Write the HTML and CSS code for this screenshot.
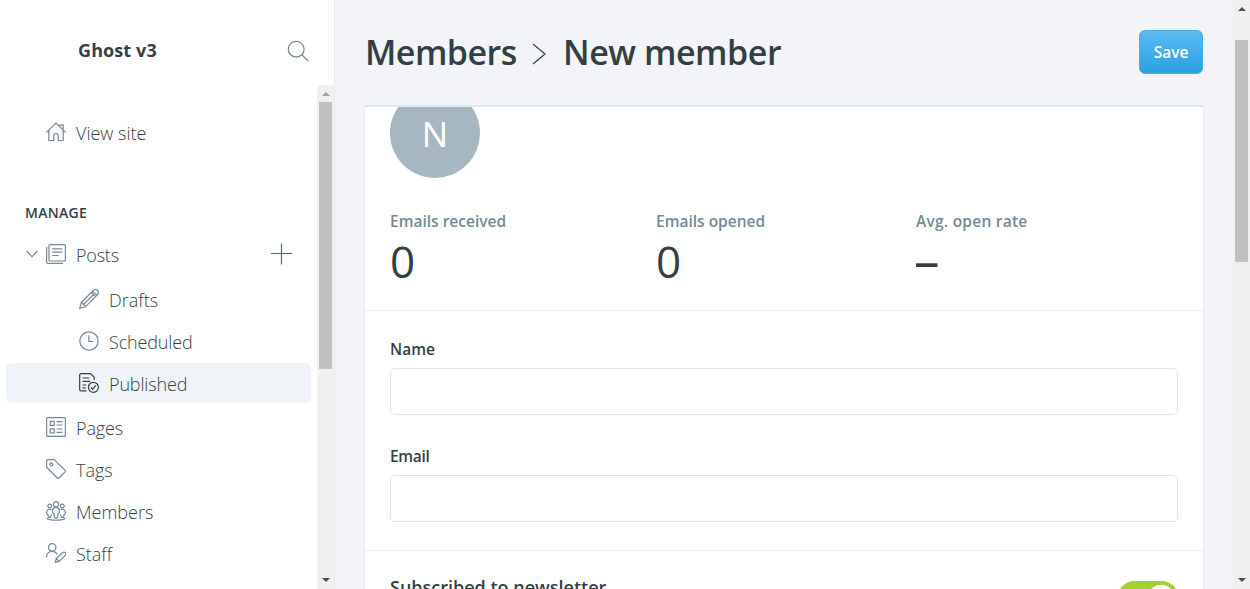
FILE: index.html
```html
<!DOCTYPE html>
<html lang="en">
<head>
<meta charset="utf-8">
<title>New member - Ghost v3</title>
<link rel="stylesheet" href="styles.css">
</head>
<body>
<div class="app">
  <nav class="sidebar">
    <header class="side-head">
      <span class="site-name">Ghost v3</span>
      <svg class="search" viewBox="0 0 22 22"><circle cx="9.2" cy="9.2" r="7.9"/><path d="M14.8 14.8l6.400 6.200"/></svg>
    </header>
    <div class="side-body">
      <div class="menu">
        <a class="item view-site">
          <svg class="icon" viewBox="0 0 20 20"><path d="M.5 10.400L10 1l9.500 9.400M2.800 8.600v9.900h5v-4.800a2.200 2.200 0 0 1 4.400 0v4.800h5V8.600M13 3.200h4.200v4.200"/></svg>
          <span>View site</span>
        </a>
        <h2 class="section"><span>MANAGE</span></h2>
        <a class="item posts">
          <svg class="chev" viewBox="0 0 12 8"><path d="M.5 1l5.500 5.700L11.500 1"/></svg>
          <svg class="icon" viewBox="0 0 20 20"><rect x="3" y=".6" width="16.400" height="16.400" rx="1"/><path d="M.6 3v15a1.400 1.400 0 0 0 1.400 1.400h15M6.200 4.800h10M6.200 8.200h10M6.200 11.500h6.500"/></svg>
          <span class="t-posts">Posts</span>
          <svg class="plus" viewBox="0 0 22 22"><path d="M10.500 .5v21M0 10.500h21"/></svg>
        </a>
        <a class="item sub">
          <svg class="icon" viewBox="0 0 20 20"><path d="M.7 19.300l1.500-5.700L14.300 1.500a2.900 2.900 0 0 1 4.200 4.200L6.400 17.800zM2.200 13.600l1.600.7.500 1.500 1.600.5.500 1.500M12.300 3.500l4.200 4.200M13.600 2.200l4.200 4.200M4.900 15.200L14.600 5.500"/></svg>
          <span>Drafts</span>
        </a>
        <a class="item sub">
          <svg class="icon" viewBox="0 0 20 20"><circle cx="10" cy="10" r="9.200"/><path d="M9.800 4.200v6.300h4.400"/></svg>
          <span class="t-sched">Scheduled</span>
        </a>
        <a class="item sub active">
          <svg class="icon" viewBox="0 0 20 20"><path d="M7.500 17.800H2A1.300 1.300 0 0 1 .7 16.500V2A1.300 1.300 0 0 1 2 .7h9.600l3.600 3.600V7M3.500 5h7M3.500 8.400h7.800M3.500 12h4M3.500 14.800h3.200"/><circle cx="14.400" cy="14.300" r="5"/><path d="M11.900 14.500l1.800 1.800 3-3.900"/></svg>
          <span class="t-pub">Published</span>
        </a>
        <a class="item pages">
          <svg class="icon" viewBox="0 0 20 20"><rect x=".6" y=".6" width="18.800" height="18.800" rx="1"/><path d="M4.200 4.400h4v4h-4zM4.200 11.800h4v4h-4zM10.500 4.600h6M10.500 8h6M10.500 12h6M10.500 15.300h6"/></svg>
          <span class="t-pages">Pages</span>
        </a>
        <a class="item">
          <svg class="icon" viewBox="0 0 20 20"><path d="M.6 2A1.400 1.400 0 0 1 2 .6h6l11.100 10.700a1.200 1.200 0 0 1 0 1.600L13 19a1.200 1.200 0 0 1-1.700 0L.6 8.200z"/><circle cx="5.300" cy="5.400" r="1.500"/></svg>
          <span>Tags</span>
        </a>
        <a class="item">
          <svg class="icon" viewBox="0 0 20 20"><circle cx="10" cy="3.200" r="2.600"/><circle cx="3.700" cy="5" r="1.900"/><circle cx="16.300" cy="5" r="1.900"/><path d="M8.600 16.800L8 12.500l-1.400-.8V9.800a3.400 3.400 0 0 1 6.800 0v1.900l-1.400.8-.6 4.300zM5.500 8.800A3 3 0 0 0 .7 11v1.700l1.200.9.500 2.700h2.200l.9-3M14.500 8.800a3 3 0 0 1 4.800 2.200v1.700l-1.200.9-.5 2.700h-2.200l-.9-3M.5 17.200c3.500 2.600 15.500 2.600 19 0"/></svg>
          <span>Members</span>
        </a>
        <a class="item">
          <svg class="icon" viewBox="0 0 20 20"><circle cx="6.200" cy="4.400" r="3.700"/><path d="M.6 14.500c0-7 7.500-8 11-3.200M9.400 19.200l.9-3.800 6.200-5.700a1.900 1.900 0 0 1 2.700 2.700l-6 6zM10.300 15.400l2.900 3"/></svg>
          <span>Staff</span>
        </a>
      </div>
      <div class="bar side-bar"><i class="up muted"></i><i class="thumb"></i><i class="down"></i></div>
    </div>
  </nav>
  <main class="main">
    <header class="top">
      <h1 class="crumbs"><span class="crumb">Members</span><svg class="sep" viewBox="0 0 14 22"><path d="M1 1l12 10L1 21"/></svg><span class="crumb-current">New member</span></h1>
      <button class="save"><span>Save</span></button>
    </header>
    <div class="viewport">
      <section class="panel">
        <div class="avatar"><span>N</span></div>
        <div class="stats">
          <div><p>Emails received</p><strong>0</strong></div>
          <div><p>Emails opened</p><strong>0</strong></div>
          <div><p class="t-avg">Avg. open rate</p><strong class="dash">–</strong></div>
        </div>
        <div class="fields">
          <label for="name">Name</label>
          <input id="name">
          <label class="t-email" for="email">Email</label>
          <input id="email">
        </div>
        <div class="newsletter"><span>Subscribed to newsletter</span><i class="toggle"></i></div>
      </section>
    </div>
  </main>
  <div class="bar page-bar"><i class="up"></i><i class="thumb"></i><i class="down"></i></div>
</div>
</body>
</html>
```
FILE: styles.css
```css
* { box-sizing: border-box; }
body { margin: 0; height: 589px; overflow: hidden; font-family: "Open Sans", "Noto Sans", sans-serif; color: #343f44; }
h1, h2, p { margin: 0; font-weight: inherit; }
svg { fill: none; stroke: #738a94; stroke-width: 1.2; flex: none; }
span, p, label { white-space: nowrap; }

.app { display: flex; height: 589px; background: #f2f4f8; }

.sidebar { width: 335px; background: #fff; border-right: 1px solid #e3e9ef; display: flex; flex-direction: column; }
.side-head { height: 85px; display: flex; justify-content: space-between; padding: 38px 25px 0 78px; }
.site-name { font-size: 18px; font-weight: 700; line-height: 24px; letter-spacing: .1px; }
.search { width: 22px; height: 22px; margin-top: 2px; }
.side-body { height: 504px; display: flex; }
.menu { width: 317px; padding: 27px 6px 0; }
.item { display: flex; align-items: center; height: 40px; margin-bottom: 2px; padding-left: 40px; border-radius: 6px; font-size: 18px; font-weight: 300; line-height: 24px; }
.item span { padding-top: 1px; }
.icon { width: 20px; height: 20px; margin-right: 10px; }
.item.sub { padding-left: 73px; }
.active { background: #f0f3f8; }
.active svg { stroke: #343f44; }
.t-posts { letter-spacing: -.2px; }
.t-sched, .t-pub, .t-pages { letter-spacing: -.15px; }
.section { margin: 51px 0 0 19px; height: 22px; font-size: 14px; font-weight: 600; line-height: 20px; letter-spacing: .3px; }
.posts { margin: 9px 0 5px; padding-left: 20px; }
.chev { width: 12px; height: 8px; margin-right: 8px; }
.plus { width: 22px; height: 22px; margin: 0 18px 0 auto; stroke: #54666d; }
.pages { margin-top: 4px; }

.bar { width: 17px; background: #f0f0f0; display: flex; flex-direction: column; align-items: center; }
.bar .thumb { width: 13px; background: #c1c1c1; }
.up, .down { border: 4px solid transparent; }
.up { border-top: 0; border-bottom-color: #505050; margin-top: 7px; }
.up.muted { border-bottom-color: #a3a3a3; }
.down { border-bottom: 0; border-top-color: #505050; margin-top: auto; margin-bottom: 7px; }
.side-bar .thumb { height: 267px; margin-top: 6px; }
.page-bar .thumb { height: 222px; margin-top: 29px; }

.main { width: 898px; }
.top { height: 105px; padding: 30px 30px 0; display: flex; justify-content: space-between; }
.crumbs { display: flex; height: 44px; align-items: center; font-size: 34px; font-weight: 600; line-height: 44px; }
.crumb { width: 152px; letter-spacing: -.5px; }
.sep { width: 14px; height: 22px; margin: 3px 17px 0 15px; stroke: #343f44; }
.crumb-current { letter-spacing: -.45px; }
.save { width: 64px; height: 44px; padding: 0; border: 1px solid #3eb0ef; border-radius: 6px; background: linear-gradient(#5bbaf1, #2aa0e2); color: #fff; font: 600 15.500px/24px "Open Sans", sans-serif; }
.viewport { height: 484px; margin: 0 29px; overflow: hidden; border-top: 2px solid #dfe9f0; padding: 0 1px; }
.panel { height: 520px; background: #fff; box-shadow: 0 0 1px 1px #e9edf3; }
.avatar { width: 90px; height: 90px; margin-left: 25px; border-radius: 50%; background: #a6b7c1; color: #fff; display: flex; align-items: center; justify-content: center; font-size: 35px; line-height: 44px; position: relative; top: -19px; }
.avatar span { padding-top: 2px; }
.stats { height: 114px; display: grid; grid-template-columns: 266px 260px 1fr; padding: 13px 25px 0; border-bottom: 1px solid #e5eff5; color: #738a94; font-size: 15.500px; font-weight: 600; line-height: 22px; }
.t-avg { letter-spacing: .25px; }
.stats strong { display: block; font-size: 44px; font-weight: 500; line-height: 58px; color: #343f44; }
.stats .dash { font-size: 51px; font-weight: 400; line-height: 54px; margin-left: -2px; }
.fields { height: 240px; padding: 27px 25px 0; border-bottom: 1px solid #e5eff5; display: flex; flex-direction: column; align-items: flex-start; }
.fields label { flex: none; font-size: 15.500px; font-weight: 600; line-height: 23px; margin-bottom: 7px; }
.fields .t-email { letter-spacing: -.3px; }
.fields input { flex: none; width: 788px; height: 47px; margin: 0 0 30px; padding: 0; border: 1px solid #dae4ea; border-radius: 5px; background: #fff; }
.fields input:last-child { margin-bottom: 0; }
.newsletter { display: flex; justify-content: space-between; padding: 24px 25px 0; font-size: 18px; font-weight: 600; line-height: 24px; }
.toggle { width: 60px; height: 32px; margin-top: 6px; border-radius: 16px; background: radial-gradient(circle 14px at 43px 17px, #fff 13px, #a4d037 13.500px); }
```
